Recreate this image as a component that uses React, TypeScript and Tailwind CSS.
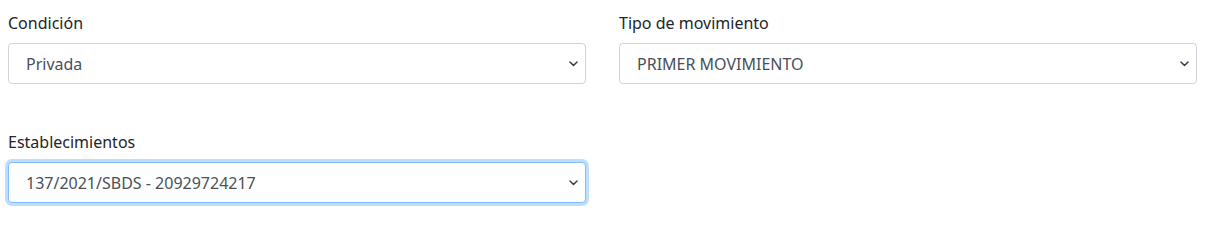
type SelectProps = {
  value: string
  focused?: boolean
}

function Chevron() {
  return (
    <svg width="9" height="6" viewBox="0 0 9 6" className="shrink-0" aria-hidden="true">
      <path d="M1 1l3.5 3.5L8 1" fill="none" stroke="#3c4043" strokeWidth="1.5" strokeLinecap="round" strokeLinejoin="round" />
    </svg>
  )
}

function SelectBox({ value, focused = false }: SelectProps) {
  return (
    <div
      role="combobox"
      tabIndex={0}
      className={`flex h-[41px] w-full items-center justify-between rounded border bg-white pl-[17px] pr-[7px] text-[16px] leading-6 text-[#495057] ${
        focused ? 'border-[#80bdff] shadow-[0_0_0_3px_rgba(0,123,255,0.25)]' : 'border-[#ced4da]'
      }`}
    >
      <span className="truncate">{value}</span>
      <Chevron />
    </div>
  )
}

function Field({ label, children }: { label: string; children: React.ReactNode }) {
  return (
    <div>
      <label className="mb-2 block text-[16px] leading-6 text-[#212529]">{label}</label>
      {children}
    </div>
  )
}

export default function App() {
  return (
    <div
      className="grid h-[207px] w-[1206px] grid-cols-2 gap-x-[33px] gap-y-[42px] bg-white pl-[8px] pr-[9px] pt-[11px]"
      style={{ fontFamily: '"Segoe UI", "Noto Sans", "Open Sans", sans-serif' }}
    >
      <Field label="Condición">
        <SelectBox value="Privada" />
      </Field>
      <Field label="Tipo de movimiento">
        <SelectBox value="PRIMER MOVIMIENTO" />
      </Field>
      <Field label="Establecimientos">
        <SelectBox value="137/2021/SBDS - 20929724217" focused />
      </Field>
    </div>
  )
}
